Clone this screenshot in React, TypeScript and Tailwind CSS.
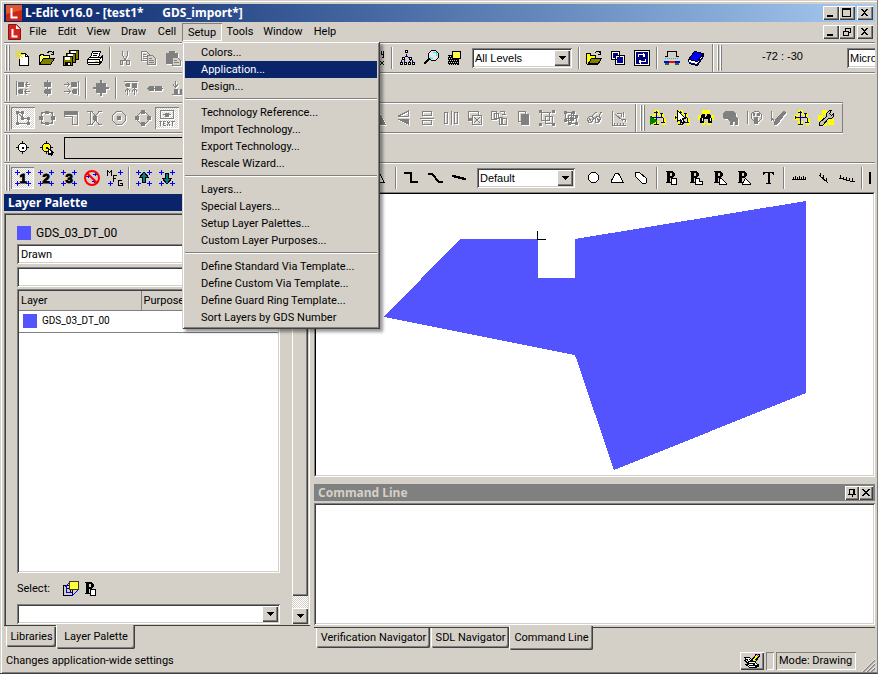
import { useState, type ReactNode } from 'react'
import { clsx } from 'clsx'

const SUNKEN =
  'p-0.5 shadow-[inset_1px_1px_0_#808080,inset_-1px_-1px_0_#fff,inset_2px_2px_0_#404040,inset_-2px_-2px_0_#d4d0c8]'
const RAISED =
  'bg-[#d4d0c8] shadow-[inset_1px_1px_0_#fff,inset_-1px_-1px_0_#404040,inset_-2px_-2px_0_#808080]'
const DITHER =
  'bg-[repeating-conic-gradient(#fff_0_25%,#d4d0c8_0_50%)] bg-[length:2px_2px]'

/* ---------- icons ---------- */

function Ico({ children, off }: { children: ReactNode; off?: boolean }) {
  return (
    <svg
      viewBox="0 0 16 16"
      shapeRendering="crispEdges"
      fill="none"
      stroke="currentColor"
      className={clsx('size-4 shrink-0', off ? 'text-[#808080] drop-shadow-[1px_1px_0_#fff]' : 'text-black')}
    >
      {children}
    </svg>
  )
}

const NewFile = () => (
  <Ico>
    <path d="M5.500 3.500h5l3 3v9h-9v-7" fill="#fff" />
    <path d="M10.500 3.500v3h3" />
    <path d="M4.500 0v9M0 4.500h9M1 1l7 7M8 1L1 8" stroke="#e0e000" />
    <path d="M4 4h1v1H4z" fill="#fff" stroke="none" />
  </Ico>
)

const OpenFile = () => (
  <Ico>
    <path d="M.5 14.500v-9h1v-1h3v1h6v3" fill="#ffff66" />
    <path d="M.5 14.500l4-6h11l-4 6z" fill="#808000" />
    <path d="M8.500 3.500l1-2h3l2 2M14.500 1v3h-3" />
  </Ico>
)

const SaveAll = () => (
  <Ico>
    <path d="M6.500.500h9v9h-9z" fill="#808000" />
    <path d="M8 1h5v3H8z" fill="#fff" stroke="none" />
    <path d="M3.500 3.500h9v9h-9z" fill="#808000" />
    <path d="M5 4h5v3H5z" fill="#fff" stroke="none" />
    <path d="M.5 6.500h9v9h-9z" fill="#808000" />
    <path d="M2 7h5v3H2z" fill="#fff" stroke="none" />
    <path d="M2 12h6v3H2z" fill="#000" stroke="none" />
    <path d="M5 13h2v2H5z" fill="#fff" stroke="none" />
  </Ico>
)

const Print = () => (
  <Ico>
    <path d="M3.500 7.500l2-6h8l-2 6z" fill="#fff" />
    <path d="M6 3.500h5M6 5.500h4" />
    <path d="M.5 9.500l2-2h11l2-2v5l-3 4H1.500l-1-1z" fill="#fff" />
    <path d="M.5 9.500h12v5M12.500 9.500l3-3M1 12.500h11M12 11.500h3" />
    <path d="M8 11h3v1H8z" fill="#cc0" stroke="none" />
  </Ico>
)

const Cut = () => (
  <Ico off>
    <path d="M5.500 1v4l2 4 2 2M10.500 1v4l-2 4-2 2" />
    <path d="M3 10h3v5H3zM9 10h4v5H9z" fill="currentColor" stroke="none" />
    <path d="M4 11h1v3H4zM10 11h2v3h-2z" fill="#d4d0c8" stroke="none" />
  </Ico>
)

const Copy = () => (
  <Ico off>
    <path d="M.5 1.500h5l3 3v6h-8zM2 4.500h3M2 6.500h4M2 8.500h4" />
    <path d="M6.500 5.500h5l3 3v6h-8z" fill="#d4d0c8" />
    <path d="M8 8.500h3M8 10.500h5M8 12.500h5" />
  </Ico>
)

const Paste = () => (
  <Ico off>
    <path d="M1 3h3V1h6v2h3v11H1z" fill="currentColor" stroke="none" />
    <path d="M7.500 7.500h5l3 3v5h-8z" fill="#d4d0c8" />
    <path d="M9 10.500h3M9 12.500h5" />
  </Ico>
)

const FindMark = () => (
  <Ico>
    <path d="M12.500 1v3h2M14.500 1v6l-1 1M8 8l7 7M15 11l-4 4" />
  </Ico>
)

const Hierarchy = () => (
  <Ico>
    <path d="M7.500 4v2M4 8.500l3-2h1l3 2M3.500 9l-2 4M5 10l1 3M11.500 9l-1 4M12.500 9l2 4" stroke="#000080" />
    <path d="M6.500.500h2v2h-2zM3.500 7.500h2v2h-2zM10.500 7.500h2v2h-2zM1.500 12.500h2v2h-2zM5.500 12.500h2v2h-2zM9.500 12.500h2v2h-2zM13.500 12.500h2v2h-2z" fill="#fff" />
  </Ico>
)

const Magnifier = () => (
  <Ico>
    <path d="M8.500.500h4l3 3v4l-3 3h-4l-3-3v-4z" fill="#e8e8e8" />
    <path d="M10 2.500h3v3M7.500 7v1h2" stroke="#0ff" />
    <path d="M6 9l-5 5" strokeWidth="2" />
  </Ico>
)

const LayerOver = () => (
  <Ico>
    <path d="M1 5h11v10H1z" fill="#000" stroke="none" />
    <path d="M1 6.500h4M2 8.500h3M1 10.500h10M2 12.500h9M1 14.500h10" stroke="#d4d0c8" strokeDasharray="1 1" />
    <path d="M5.500 1.500h8v7h-8z" fill="#ffff40" stroke="#000" />
  </Ico>
)

const OpenCell = () => (
  <Ico>
    <path d="M.5 13.500v-10h4v2h5v3" fill="#ff0" />
    <path d="M2.500 13.500l3-5h10l-3 5z" fill="#808000" />
    <path d="M1 14.500h11M8.500 3.500l2-2h3l1 2M14.500 1v3h-3" />
  </Ico>
)

const CopyCell = () => (
  <Ico>
    <path d="M1.500 1.500h8v8h-8zM5.500 5.500h9v9h-9z" fill="#fff" />
    <path d="M3 3h5v2H3zM3 3h2v5H3zM7 7h6v6H7z" fill="#0000a0" stroke="none" />
  </Ico>
)

const SwapCell = () => (
  <Ico>
    <path d="M.5.500h15v15H.500z" fill="#fff" />
    <path d="M2 2h12v12H2z" fill="#000080" stroke="none" />
    <path d="M4.500 7V4.500H11M9.500 3v4M11.500 9v2.500H5M6.500 9.500v4" stroke="#fff" />
    <path d="M10.500 3.500v3M5.500 10v3" stroke="#fff" />
  </Ico>
)

const CrossSection = () => (
  <Ico>
    <path d="M1 6.500h2.500v-5h9v5H15" />
    <path d="M1 8.500h14" stroke="#0cc" strokeDasharray="1 1" />
    <path d="M0 12h5M11 12h5" stroke="#00f" strokeWidth="2" />
    <path d="M5 11h6v2H5z" fill="red" stroke="none" />
    <path d="M1 13h4v2H1zM11 13h4v2h-4z" fill="#008000" stroke="none" />
  </Ico>
)

const Book = () => (
  <Ico>
    <path d="M6.500 1.500l9 2v3l-6 9-8-2-1-3z" fill="#fff" />
    <path d="M6.500 1.500l9 2-6 8-9-2z" fill="#00f" />
    <path d="M1 12.500l8 2 6-8" stroke="#0000a0" />
  </Ico>
)

const G = (d: string, f = '') => (
  <Ico off>
    <path d={d} />
    {f && <path d={f} fill="currentColor" stroke="none" />}
  </Ico>
)

const alignLeft = G('M1.500 1v14M10 4.500h5M12.500 2l-2 2.500 2 2.500M9 11.500h6M11.500 9l-2 2.500 2 2.500', 'M3 2h6v5H3zM4 9h3l1 1v3l-1 1H4l-1-1v-3z')
const alignCenter = G('M8.500 0v16', 'M5 2h7v5H5zM6 9h5l1 1v3l-1 1H6l-1-1v-3z')
const alignRight = G('M15.500 1v14M1 4.500h5M4 2l2.500 2.500L4 7M1 11.500h6M5 9l2.500 2.500L5 14', 'M8 2h6v5H8zM10 9h3l1 1v3l-1 1h-3l-1-1v-3z')
const alignBox = G('M0 0', 'M7 0h2v3h4v4h3v2h-3v4H9v3H7v-3H3V9H0V7h3V3h4z')
const alignTop = G('M1 1.500h14M4.500 9v6M2 11.500l2.500-3 2.500 3M11.500 9v6M9 11.500l2.500-3 2.500 3', 'M3 3h3l1 1v3H6L3 7 2 6V4zM9 3h5v5H9z')
const alignMiddle = G('M0 8.500h16', 'M2 6h4l1 1v3l-1 1H2l-1-1V7zM8 6h7v5H8z')
const alignBottom = G('M1 14.500h14M4.500 1v6M2 4.500l2.500 3 2.500-3M11.500 1v6', 'M3 9h4v5H3zM9 9h5v5H9z')

const drawPoly = G('M2.500 2.500h5v6h6v5h-11zM2 2l6 6', 'M1 1h3v3H1zM6 1h3v3H6zM6 7h3v3H6zM12 7h3v3h-3zM12 12h3v3h-3zM1 12h3v3H1z')
const drawBox = G('M2.500 2.500h11v11h-11z', 'M6 1h4v3H6zM6 12h4v3H6zM0 6h4v4H0zM12 6h4v4h-4zM2 2h2v2H2zM12 2h2v2h-2zM2 12h2v2H2zM12 12h2v2h-2z')
const drawWire = G('M1.500 1.500h13v13h-5v-8h-8z', 'M1 2h13v3H1z')
const drawBend = G('M0 1.500h5l3 4v5l-3 4H0M15 1.500h-3l-5 6 5 7h3M3.500 2v12', 'M6 6h4v4H6z')
const drawCircle = G('M5.500 1.500h5l4 4v5l-4 4h-5l-4-4v-5z', 'M6 6h4v4H6z')
const drawNodes = G('M5.500 2.500h5l3 3v5l-3 3h-5l-3-3v-5z', 'M6 0h4v4H6zM6 12h4v4H6zM0 6h4v4H0zM12 6h4v4h-4z')
const flipH = G('M7 1l7 13H0z', 'M7 1l7 13H0z')
const flipV = G('M13.500 1v5h-10zM13.500 14V9h-10z', 'M3 9h11v6z')
const distV = G('M3.500 1.500h9v4h-9zM3.500 10.500h9v4h-9zM1 8h14')
const distH = G('M1.500 2.500h3v11h-3zM11.500 2.500h3v11h-3zM8 1v14')
const cutShape = G('M11.500 5V1.500h-10v9H5M5.500 5.500h9v9h-9zM7 7l6 6M13 7l-6 6', 'M2 8h3v2H2z')
const replace = G('M.5 1.500h5v8h-5zM3.500 3.500h4v5h-4zM9 1.500h4v3M11 4l2 1 2-1M8.500 7.500h3v7h-3zM10.500 8.500h5v6h-5z')
const merge = G('M3.500 1.500h7v10h-7zM6.500 4.500h7v10h-7z', 'M7 5h6v9H7z')
const group = G('M2.500 2.500h8v8h-8zM6.500 6.500h7v7h-7z', 'M0 0h3v3H0zM13 0h3v3h-3zM0 13h3v3H0zM13 13h3v3h-3zM3 2h9v1H3z')
const ungroup = G('M2.500 2.500h8v8h-8zM5.500 5.500h8v8h-8zM8 3v10M3 8h10', 'M1 1h3v3H1zM9 1h3v3H9zM1 9h3v3H1zM12 5h3v3h-3zM12 12h3v3h-3zM5 12h3v3H5zM7 7h3v3H7z')
const glasses = G('M.5 8.500l2-2h3l1 2-2 4h-3zM8.500 8.500l1-2h3l1 2-2 4h-3zM6 8h3M5 6l4-4h1M12 6l2-4h1M2 8l2 3M10 8l2 3')
const ruler = G('M1.500 1v14H15M4 4l8 7M6 3h4v4M12 2v5M3 13v2M6 13v2M9 13v2M12 13v2M11 9h3v3')

const TextTool = () => (
  <Ico off>
    <path d="M1.500.500h13v8h-13z" />
    <path d="M6 3h4v4H6zM4 4h8v1H4z" fill="currentColor" stroke="none" />
    <path d="M0 11.500h3M1.500 11v5M4.500 11v5M4 11.500h3M4 13.500h2M4 15.500h3M8 11l3 5M11 11l-3 5M12 11.500h4M13.500 11v5" />
  </Ico>
)

/* yellow-haloed netlist tree shared by the SDL toolbar */
function Tree({ children }: { children?: ReactNode }) {
  return (
    <Ico>
      <path d="M4 0h5v5H4zM0 5h5v5H0zM4 11h5v5H4zM9 3h5v4H9zM12 8h4v7h-4z" fill="#ff0" stroke="none" />
      <path d="M6.500 1v14M1 7.500h12M11.500 3v5M10 3.500h3M13.500 8v5M11 12.500h4M4 14.500h5M4 2.500h4M1.500 6v3" stroke="#000090" />
      {children}
    </Ico>
  )
}

const TreeRun = () => (
  <Tree>
    <path d="M0 6l8 5-8 4z" fill="#008000" stroke="none" />
  </Tree>
)
const TreePick = () => (
  <Tree>
    <path d="M3.500.500v11l3-2 2 4 2-1-2-4h3z" fill="#fff" />
  </Tree>
)
const TreeFind = () => (
  <Ico>
    <path d="M4 0h8v4H4zM0 5h4v5H0zM12 5h4v5h-4zM4 12h3v3H4zM9 12h4v3H9z" fill="#ff0" stroke="none" />
    <path d="M4 4h3v2h2V4h3l2 5v4h-4V9H6v4H2V9z" fill="#000" stroke="none" />
    <path d="M4 8h1v3H4zM12 8h1v3h-1zM7 6h1v1H7z" fill="#fff" stroke="none" />
  </Ico>
)
const TreeTool = () => (
  <Ico>
    <path d="M4 0h5v5H4zM0 5h5v6H0zM4 11h5v5H4zM10 9h6v6h-6z" fill="#ff0" stroke="none" />
    <path d="M1.500 12.500l7-6v-3l3-3h2l-2 3 2 2 2-2v3l-2 2h-3l-6 7h-3z" fill="#c0c0c0" />
  </Ico>
)
const skull = G('M0 0', 'M3 1h8l3 3v3l2 2v6h-3v-3h-2v3H8v-3L5 9H2L1 7V3z')
const pinned = G('M1.500 1v13M5.500 3.500l3-2h4l3 3v4l-3 3h-4l-3-3z', 'M7 3h2v3H7zM11 3h3v3h-3zM8 7h4v7H8z')
const checkOff = G('M1.500 1v10M2 8l4 6 9-12', 'M5 9l9-8 2 2-9 12H4z')

function Target({ color, pick }: { color: string; pick?: boolean }) {
  return (
    <Ico>
      <path d="M7.500 1v13M1 7.500h13" />
      <path d="M5.500 3.500h4l2 2v4l-2 2h-4l-2-2v-4z" fill={color} />
      <path d="M7 7h1v1H7z" fill="#000" />
      {pick && <path d="M9.500 8.500v6l2-1 1 2 1-1-1-2h2z" fill="#fff" />}
    </Ico>
  )
}

const CORNERS = 'M2.500 0v5M0 2.500h5M13.500 0v5M11 2.500h5M2.500 11v5M0 13.500h5M13.500 11v5M11 13.500h5'

function Snap({ digit }: { digit: string }) {
  return (
    <Ico>
      <path d={CORNERS} stroke="#00f" />
      <text
        x="8"
        y="13"
        textAnchor="middle"
        fill="#000"
        strokeWidth="1"
        className="font-['Liberation_Sans',sans-serif] text-[13px] font-bold"
      >
        {digit}
      </text>
    </Ico>
  )
}

const NoSnap = () => (
  <Ico>
    <path d="M4.500 4v4M2 6.500h5M11.500 2v4M9 4.500h5M10.500 9v4M8 11.500h5" stroke="#00f" />
    <g stroke="#f00" strokeWidth="2" shapeRendering="auto">
      <circle cx="8" cy="8" r="7" />
      <path d="M3 3l10 10" />
    </g>
  </Ico>
)

const MfgSnap = () => (
  <Ico>
    <path d="M13.500 0v5M11 2.500h5M3.500 11v5M1 13.500h5" stroke="#00f" />
    <path d="M.5 6V.500l2 2 2-2V6M6.500 12V5.500H10M7 8.500h2M15 10.500h-3.500v5H15v-2h-2" />
  </Ico>
)

const ArrowSnap = ({ down }: { down?: boolean }) => (
  <Ico>
    <path d={CORNERS} stroke="#00f" />
    <path d={down ? 'M6.500 3.500h3v5h3l-4 5h-1l-4-5h3z' : 'M6.500 12.500h3v-5h3l-4-5h-1l-4 5h3z'} fill="#008080" />
  </Ico>
)

const K = (d: string, fill = 'none', w = 1) => (
  <Ico>
    <path d={d} fill={fill} strokeWidth={w} />
  </Ico>
)

const wire90 = K('M1 3h7v9h7', 'none', 2)
const wire45 = K('M1 4h4l7 8h4', 'none', 2)
const wireAny = K('M1 6h3v1h4v1h4v1h3', 'none', 2)
const circle = K('M6.500 2.500h4l3 3v4l-3 3h-4l-3-3v-4z', '#fff')
const pie = K('M6.500 3.500h3l5 9h-12v-2z', '#fff')
const torus = K('M2.500 2.500h4l7 6v4l-1 1h-3l-7-7z', '#fff')

function Port({ shape }: { shape: string }) {
  return (
    <Ico>
      <path d="M2 1h7v1h1v1h1v3h-1v1H9v1H6v4h1v1H2v-1h1V2H2zM6 3v3h2V3z" fill="#000" fillRule="evenodd" stroke="none" />
      <path d={shape} fill="#fff" />
    </Ico>
  )
}

const PORT_SHAPES = ['M7.500 8.500h5v6h-5z', 'M7.500 8.500h4v3h3v3h-7z', 'M7.500 8.500h2l5 5v1h-7z', 'M9.500 8.500l5 5v1h-8v-1z']

const textT = (
  <Ico>
    <path d="M3 2h11v3h-1V4h-1V3H9v10h2v1H6v-1h2V3H5v1H4v1H3z" fill="#000" stroke="none" />
    <path d="M8 3h2v10H8z" fill="#000" stroke="none" />
  </Ico>
)
const rulerH = K('M1 9.500h14M2.500 7v2M4.500 6v3M6.500 7v2M8.500 6v3M10.500 7v2M12.500 6v3M14.500 7v2')
const rulerD = K('M4 5l9 8M5.500 3v3M8.500 5v3M11.500 8v3')
const rulerA = K('M0 8.500h4M4 9.500h4M7 10.500h4M11 11.500h5M1.500 5v3M4.500 7v2M7.500 7v3M10.500 8v2M13.500 8v3')

/* ---------- controls ---------- */

function Tool({ label, on, narrow, children }: { label: string; on?: boolean; narrow?: boolean; children: ReactNode }) {
  return (
    <button
      type="button"
      aria-label={label}
      aria-pressed={on}
      className={clsx(
        'flex h-[22px] shrink-0 items-center justify-center',
        narrow ? 'w-[23px]' : 'w-6',
        on && 'shadow-[inset_1px_1px_0_#808080,inset_-1px_-1px_0_#fff]',
        on && DITHER
      )}
    >
      {children}
    </button>
  )
}

const Grip = () => (
  <span className="mr-px flex h-[26px] shrink-0 gap-px pl-px">
    <i className="w-[2px] border-r border-[#808080] bg-white" />
    <i className="w-[2px] border-r border-[#808080] bg-white" />
  </span>
)

const Sep = () => (
  <span className="mx-0.5 h-[22px] w-0.5 shrink-0 border-r border-l border-r-white border-l-[#808080]" />
)

const Down = () => (
  <svg viewBox="0 0 7 4" shapeRendering="crispEdges" className="h-1 w-[7px]">
    <path d="M0 0h7v1H6v1H5v1H4v1H3V3H2V2H1V1H0z" />
  </svg>
)

function Combo({ label, value, className }: { label: string; value: string; className?: string }) {
  return (
    <span className={clsx('flex shrink-0 bg-white', SUNKEN, className)}>
      <select
        aria-label={label}
        className="min-w-0 flex-1 appearance-none bg-white px-px font-['Liberation_Sans',sans-serif] text-[11px] outline-none"
      >
        <option>{value}</option>
      </select>
      <span className={clsx('flex w-4 items-center justify-center', RAISED)}>
        <Down />
      </span>
    </span>
  )
}

function Band({ children, className }: { children?: ReactNode; className?: string }) {
  return (
    <div className="border-t border-[#808080]">
      <div className={clsx('flex h-[29px] items-center overflow-hidden border-t border-white', className)}>{children}</div>
    </div>
  )
}

function WinButtons({ restore }: { restore?: boolean }) {
  const btn = clsx('flex h-[14px] w-4 items-center justify-center', RAISED)
  return (
    <span className="ml-auto flex pr-0.5">
      <button type="button" aria-label="Minimize" className={btn}>
        <svg viewBox="0 0 10 10" className="size-2.5" shapeRendering="crispEdges"><path d="M1 7h6v2H1z" /></svg>
      </button>
      <button type="button" aria-label={restore ? 'Restore' : 'Maximize'} className={btn}>
        <svg viewBox="0 0 10 10" className="size-2.5" shapeRendering="crispEdges" fill="none" stroke="#000">
          {restore ? <path d="M3 1.500h5.500v4H7M3.500 1v3M3 1h6M1.500 4.500h5v4h-5zM1 4h6" /> : <path d="M.5.500h8v8h-8zM1 1.500h8" />}
        </svg>
      </button>
      <button type="button" aria-label="Close" className={clsx('ml-0.5', btn)}>
        <svg viewBox="0 0 10 10" className="size-2.5" shapeRendering="crispEdges">
          <path d="M1 1h2v1h1v1h1V2h1V1h2v1H7v1H6v1H5v1h1v1h1v1h1v1H6V7H5V6H4v1H3v1H1V7h1V6h1V5h1V4H3V3H2V2H1z" />
        </svg>
      </button>
    </span>
  )
}

const AppIcon = ({ className }: { className: string }) => (
  <svg viewBox="0 0 16 16" className={className} aria-hidden="true">
    <path d="M0 0h16v16H0z" fill="#c8281c" />
    <path d="M0 0h16v5L0 9z" fill="#e2582e" />
    <path d="M5.500 3v9.500h6" fill="none" stroke="#fff" strokeWidth="2" />
  </svg>
)

const DocIcon = () => (
  <svg viewBox="0 0 13 16" className="h-4 w-[13px]" aria-hidden="true">
    <path d="M.5.500h8l4 4v11H.500z" fill="#cf2420" stroke="#901010" />
    <path d="M8 1v4h4z" fill="#fff" />
    <path d="M4.500 5v7.500h5" fill="none" stroke="#fff" strokeWidth="2" />
  </svg>
)

/* ---------- menus ---------- */

const MENUS = [
  ['File', 'w-7'],
  ['Edit', 'w-[30px]'],
  ['View', 'w-[33px]'],
  ['Draw', 'w-[37px]'],
  ['Cell', 'w-[30px]'],
  ['Setup', 'w-10'],
  ['Tools', 'w-9'],
  ['Window', 'w-[50px]'],
  ['Help', 'w-[34px]'],
]

const SETUP_GROUPS = [
  ['Colors...', 'Application...', 'Design...'],
  ['Technology Reference...', 'Import Technology...', 'Export Technology...', 'Rescale Wizard...'],
  ['Layers...', 'Special Layers...', 'Setup Layer Palettes...', 'Custom Layer Purposes...'],
  [
    'Define Standard Via Template...',
    'Define Custom Via Template...',
    'Define Guard Ring Template...',
    'Sort Layers by GDS Number',
  ],
]

function SetupMenu() {
  const [active, setActive] = useState('Application...')
  return (
    <div
      role="menu"
      className="absolute top-[18px] left-0 z-10 w-[198px] bg-[#d4d0c8] px-[3px] pt-[3px] pb-[3px] shadow-[inset_1px_1px_0_#d4d0c8,inset_-1px_-1px_0_#404040,inset_2px_2px_0_#fff,inset_-2px_-2px_0_#808080,3px_3px_3px_rgba(0,0,0,0.4)]"
    >
      {SETUP_GROUPS.map((group, i) => (
        <div key={i} className={clsx(i > 0 && 'mt-[3px] border-t border-[#808080]')}>
          <div className={clsx(i > 0 && 'border-t border-white pt-1')}>
            {group.map((item) => (
              <button
                key={item}
                type="button"
                role="menuitem"
                onMouseEnter={() => setActive(item)}
                className={clsx(
                  'block h-[17px] w-full pl-4 text-left leading-[16px] whitespace-nowrap',
                  active === item && 'bg-[#0a246a] text-white'
                )}
              >
                {item}
              </button>
            ))}
          </div>
        </div>
      ))}
    </div>
  )
}

function Tab({ label, active, className }: { label: string; active?: boolean; className: string }) {
  return (
    <button
      type="button"
      role="tab"
      aria-selected={!!active}
      className={clsx(
        'shrink-0 rounded-b-[2px] border-l border-white bg-[#d4d0c8] whitespace-nowrap shadow-[inset_-1px_-1px_0_#404040,inset_-2px_-2px_0_#808080]',
        active ? '-mt-0.5 h-6' : 'h-5',
        className
      )}
    >
      {label}
    </button>
  )
}

/* ---------- panels ---------- */

function LayerPalette() {
  return (
    <section className="flex w-[306px] shrink-0 flex-col pt-0.5">
      <h2 className="h-[17px] bg-[#0a246a] pl-1 font-['Noto_Sans',sans-serif] text-[12px] leading-[17px] font-bold text-white">
        Layer Palette
      </h2>
      <div className={clsx('mt-0.5 flex min-h-0 flex-1 overflow-hidden', SUNKEN)}>
        <div className="flex flex-1 flex-col pt-2 pl-[11px]">
          <div className="mb-0.5 flex h-[19px] items-center gap-1 text-[12px]">
            <span className="mr-px size-[14px] bg-[#5454ff]" />
            GDS_03_DT_00
          </div>
          <input aria-label="Purpose" defaultValue="Drawn" className={clsx('h-5 w-[263px] bg-white pl-1', SUNKEN)} />
          <input aria-label="Filter layers" className={clsx('mt-[3px] h-5 w-[263px] bg-white', SUNKEN)} />
          <div className={clsx('mt-[2px] min-h-0 w-[263px] flex-1 bg-white', SUNKEN)}>
            <table className="w-full border-collapse text-left">
              <thead>
                <tr className="h-5 bg-[#d4d0c8] shadow-[inset_0_-1px_0_#808080]">
                  <th className="w-[122px] border-r border-[#808080] pl-0.5 font-normal">Layer</th>
                  <th className="border-l border-white pl-0.5 font-normal">Purpose</th>
                </tr>
              </thead>
              <tbody>
                <tr className="h-[21px] border-b border-[#808080] text-[10px]">
                  <td colSpan={2}>
                    <span className="flex items-center gap-[5px] pl-1">
                      <span className="size-[14px] bg-[#5454ff]" />
                      GDS_03_DT_00
                    </span>
                  </td>
                </tr>
              </tbody>
            </table>
          </div>
          <div className="flex h-[31px] items-center">
            <span className="w-[46px]">Select:</span>
            <button type="button" aria-label="Select layer">
              <Ico>
                <path d="M.5 4.500h9v10h-9zM3.500 7.500h4v4h-4z" fill="#d4d0c8" />
                <path d="M2 6l5-5M9 15l6-6M3 5v6h6" stroke="#00f" />
                <path d="M6.500.500h9v8h-9z" fill="#ffff40" stroke="#404000" />
              </Ico>
            </button>
            <button type="button" aria-label="Select port" className="ml-1">
              <Port shape={PORT_SHAPES[0]} />
            </button>
          </div>
          <Combo label="Selection" value="" className="h-5 w-[263px]" />
        </div>
        <div className="flex w-4 flex-col">
          <span className={clsx('flex-1', RAISED)} />
          <span className={clsx('h-3', DITHER)} />
          <button type="button" aria-label="Scroll down" className={clsx('flex h-4 items-center justify-center', RAISED)}>
            <Down />
          </button>
        </div>
      </div>
      <div role="tablist" className="flex h-6 shrink-0 items-start pt-px pl-0.5 shadow-[0_-1px_0_#404040]">
        <Tab label="Libraries" className="w-[50px]" />
        <Tab label="Layer Palette" active className="w-[79px]" />
      </div>
    </section>
  )
}

function Drawing() {
  return (
    <div className="min-h-0 flex-1 overflow-hidden border border-t-[#808080] border-r-white border-b-white border-l-[#808080]">
      <div className="h-full border border-t-black border-r-[#d4d0c8] border-b-[#d4d0c8] border-l-black bg-white">
        <svg viewBox="0 0 557 281" className="h-[281px] w-[557px]" shapeRendering="crispEdges" aria-label="Layout cell">
          <path d="M68 123L144 45H222V84H259V45L490 7V199L298 276 259 161z" fill="#5454ff" />
          <path d="M221.500 37v9M221 45.500h9" stroke="#000" />
        </svg>
      </div>
    </div>
  )
}

function CommandLine() {
  const btn = clsx('flex size-[14px] items-center justify-center', RAISED)
  return (
    <section className="mt-[7px] flex h-[166px] shrink-0 flex-col">
      <div className="flex h-[17px] items-center bg-[#808080] pr-0.5 pl-1">
        <h2 className="font-['Noto_Sans',sans-serif] text-[12px] font-bold text-[#d4d0c8]">Command Line</h2>
        <button type="button" aria-label="Pin" className={clsx('ml-auto', btn)}>
          <svg viewBox="0 0 8 8" className="size-2" shapeRendering="crispEdges">
            <path d="M1 0h6v5h1v1H5v2H4V6H0V5h1zm1 1v4h3V1z" fillRule="evenodd" />
          </svg>
        </button>
        <button type="button" aria-label="Close" className={btn}>
          <svg viewBox="0 0 8 8" className="size-2" shapeRendering="crispEdges">
            <path d="M0 0h2v1h1v1h2V1h1V0h2v1H7v1H6v1H5v1h1v1h1v1h1v1H6V6H5V5H3v1H2v1H0V6h1V5h1V4h1V3H2V2H1V1H0z" />
          </svg>
        </button>
      </div>
      <textarea aria-label="Command input" className={clsx('mt-0.5 h-[122px] w-full resize-none bg-white outline-none', SUNKEN)} />
      <div role="tablist" className="mt-0.5 flex h-[22px] items-start border-t border-[#404040] pl-0.5">
        <Tab label="Verification Navigator" className="mr-px w-[114px]" />
        <Tab label="SDL Navigator" className="w-[78px]" />
        <Tab label="Command Line" active className="w-[84px]" />
      </div>
    </section>
  )
}

export default function App() {
  return (
    <div className="flex h-screen min-h-[560px] flex-col overflow-hidden border-r border-b border-r-[#808080] border-b-[#404040] bg-[#d4d0c8] pt-1 pr-0.5 pb-px pl-1 font-['Roboto',sans-serif] text-[11px] leading-[14px] text-black shadow-[inset_1px_1px_0_#d4d0c8,inset_2px_2px_0_#fff,inset_0_-1px_0_#808080]">
      <header className="flex h-[18px] shrink-0 items-center gap-[3px] bg-linear-to-r from-[#0a246a] to-[#a6caf0] pl-0.5 text-white">
        <AppIcon className="size-4" />
        <h1 className="font-['Noto_Sans',sans-serif] text-[12px] font-bold whitespace-pre">
          {'L-Edit v16.0 - [test1*      GDS_import*]'}
        </h1>
        <span className="ml-auto text-black">
          <WinButtons />
        </span>
      </header>

      <nav className="flex h-5 shrink-0 items-center">
        <span className="flex w-5 justify-center">
          <DocIcon />
        </span>
        {MENUS.map(([name, width]) => (
          <div key={name} className={clsx('relative h-[18px]', width)}>
            <button
              type="button"
              className={clsx(
                'h-[18px] w-full text-center',
                name === 'Setup' && 'pt-px shadow-[inset_1px_1px_0_#808080,inset_-1px_-1px_0_#fff]'
              )}
            >
              {name}
            </button>
            {name === 'Setup' && <SetupMenu />}
          </div>
        ))}
        <WinButtons restore />
      </nav>

      <div className="shrink-0">
        <Band>
          <Grip />
          <Tool label="New"><NewFile /></Tool>
          <Tool label="Open"><OpenFile /></Tool>
          <Tool label="Save all"><SaveAll /></Tool>
          <Tool label="Print"><Print /></Tool>
          <Sep />
          <Tool label="Cut"><Cut /></Tool>
          <Tool label="Copy"><Copy /></Tool>
          <Tool label="Paste"><Paste /></Tool>
          <span className="w-[180px] shrink-0" />
          <Tool label="Find"><FindMark /></Tool>
          <Sep />
          <Tool label="Hierarchy"><Hierarchy /></Tool>
          <Tool label="Zoom"><Magnifier /></Tool>
          <Tool label="View layer"><LayerOver /></Tool>
          <Combo label="Levels" value="All Levels" className="mr-1 ml-[5px] h-5 w-[100px]" />
          <Sep />
          <Tool label="Open cell"><OpenCell /></Tool>
          <Tool label="Copy cell"><CopyCell /></Tool>
          <Tool label="Swap cell"><SwapCell /></Tool>
          <Sep />
          <Tool label="Cross section"><CrossSection /></Tool>
          <Tool label="Manual"><Book /></Tool>
          <span className="mr-0.5 ml-1 h-[28px] w-0.5 shrink-0 border-r border-l border-r-white border-l-[#808080]" />
          <Grip />
          <output className="w-[124px] shrink-0 pb-1 pl-[39px] font-['Liberation_Sans',sans-serif] text-[11px]">-72 : -30</output>
          <Combo label="Units" value="Microns" className="h-5 w-[90px]" />
        </Band>

        <Band>
          <Grip />
          <Tool label="Align left">{alignLeft}</Tool>
          <Tool label="Align center">{alignCenter}</Tool>
          <Tool label="Align right">{alignRight}</Tool>
          <Sep />
          <Tool label="Align both">{alignBox}</Tool>
          <Sep />
          <Tool label="Align top">{alignTop}</Tool>
          <Tool label="Align middle">{alignMiddle}</Tool>
          <Tool label="Align bottom">{alignBottom}</Tool>
        </Band>

        <div className="w-fit border-b border-white">
          <div className="border-b border-[#808080]">
            <Band className="border-r border-r-[#808080]">
              <Grip />
              <Tool label="Edit polygon" on>{drawPoly}</Tool>
              <Tool label="Edit box">{drawBox}</Tool>
              <Tool label="Edit wire">{drawWire}</Tool>
              <Tool label="Edit bend">{drawBend}</Tool>
              <Tool label="Edit circle">{drawCircle}</Tool>
              <Tool label="Edit nodes">{drawNodes}</Tool>
              <Tool label="Edit text" on><TextTool /></Tool>
              <span className="w-[188px] shrink-0" />
              <Tool label="Flip horizontal">{flipH}</Tool>
              <Tool label="Flip vertical">{flipV}</Tool>
              <Tool label="Slice horizontal">{distV}</Tool>
              <Tool label="Slice vertical">{distH}</Tool>
              <Tool label="Nibble">{cutShape}</Tool>
              <Tool label="Replace">{replace}</Tool>
              <Tool label="Merge">{merge}</Tool>
              <Tool label="Group">{group}</Tool>
              <Tool label="Ungroup">{ungroup}</Tool>
              <Tool label="Find object">{glasses}</Tool>
              <Tool label="Measure">{ruler}</Tool>
              <span className="mr-0.5 ml-1 h-[28px] w-0.5 shrink-0 border-r border-l border-r-white border-l-[#808080]" />
              <Grip />
              <Tool label="Run SDL"><TreeRun /></Tool>
              <Tool label="Pick net"><TreePick /></Tool>
              <Tool label="Find net"><TreeFind /></Tool>
              <Tool label="Ghost">{skull}</Tool>
              <Tool label="Mark">{pinned}</Tool>
              <Tool label="Check">{checkOff}</Tool>
              <Tool label="Netlist"><Tree /></Tool>
              <Tool label="SDL options"><TreeTool /></Tool>
              <span className="w-1" />
            </Band>
          </div>
        </div>

        <div className="flex h-[28px] items-center">
          <Grip />
          <Tool label="Origin"><Target color="#fff" /></Tool>
          <Tool label="Pick origin"><Target color="#ff0" pick /></Tool>
          <input aria-label="Coordinates" className="ml-[5px] h-[22px] w-[300px] border border-black bg-[#d4d0c8]" />
        </div>

        <Band>
          <Grip />
          <Tool narrow label="Snap 1" on><Snap digit="1" /></Tool>
          <Tool narrow label="Snap 2"><Snap digit="2" /></Tool>
          <Tool narrow label="Snap 3"><Snap digit="3" /></Tool>
          <Tool narrow label="No snap"><NoSnap /></Tool>
          <Tool narrow label="Manufacturing grid"><MfgSnap /></Tool>
          <Sep />
          <Tool narrow label="Grid up"><ArrowSnap /></Tool>
          <Tool narrow label="Grid down"><ArrowSnap down /></Tool>
          <span className="w-[188px] shrink-0" />
          <Tool label="Polygon">{pie}</Tool>
          <span className="w-[3px]" />
          <Sep />
          <Tool label="90 degree wire">{wire90}</Tool>
          <Tool label="45 degree wire">{wire45}</Tool>
          <Tool label="All angle wire">{wireAny}</Tool>
          <Combo label="Wire style" value="Default" className="mr-1.5 ml-1.5 h-5 w-[98px]" />
          <Tool label="Circle">{circle}</Tool>
          <Tool label="Pie">{pie}</Tool>
          <Tool label="Torus">{torus}</Tool>
          <span className="w-px" />
          <Sep />
          {PORT_SHAPES.map((shape, i) => (
            <Tool key={i} label={`Port ${i + 1}`}>
              <Port shape={shape} />
            </Tool>
          ))}
          <Tool label="Text">{textT}</Tool>
          <span className="w-px" />
          <Sep />
          <Tool label="Ruler horizontal">{rulerH}</Tool>
          <Tool label="Ruler diagonal">{rulerD}</Tool>
          <Tool label="Ruler any angle">{rulerA}</Tool>
          <Sep />
          <span className="ml-1 h-3 w-0.5 bg-black" />
        </Band>
      </div>

      <main className="flex min-h-0 flex-1 gap-1">
        <LayerPalette />
        <div className="flex min-w-0 flex-1 flex-col">
          <Drawing />
          <CommandLine />
        </div>
      </main>

      <footer className="flex h-[22px] shrink-0 items-center gap-0.5 pl-0.5">
        <p className="flex-1">Changes application-wide settings</p>
        <button type="button" aria-label="Edit mode" className={clsx('flex h-[18px] w-6 items-center justify-center', RAISED)}>
          <Ico>
            <path d="M0 4.500h5l3 2 3-3h3l-4 5 4 3v2l-2 1H6l-4-3 2-1-3-3 2-1z" fill="#fff" />
            <path d="M1 5.500l4 3h4M2 8.500l4 2h5M3 11.500l4 1h7M5 6.500l4 2M9 11l4 3" />
            <path d="M9 8l4-5" stroke="#ff0" strokeWidth="2" />
            <path d="M8 8l4-7h3v3l-4 5" />
            <path d="M13 1h1v2h-1z" fill="#f0f" stroke="none" />
          </Ico>
        </button>
        <span className="h-[18px] w-2 shadow-[inset_1px_1px_0_#808080,inset_-1px_-1px_0_#fff]" />
        <span className="h-[18px] w-20 pl-[3px] leading-[18px] whitespace-nowrap shadow-[inset_1px_1px_0_#808080,inset_-1px_-1px_0_#fff]">
          Mode: Drawing
        </span>
        <svg viewBox="0 0 13 13" className="ml-1 size-[13px] self-end" stroke="#808080" strokeWidth="1.500">
          <path d="M1 13L13 1M5 13l8-8M9 13l4-4" />
          <path d="M0 13L13 0M4 13l9-9M8 13l5-5" stroke="#fff" strokeWidth=".7" />
        </svg>
      </footer>
    </div>
  )
}
